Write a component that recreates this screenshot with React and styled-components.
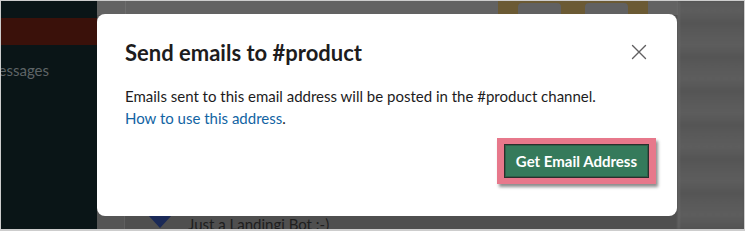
import React from "react";
import styled, { createGlobalStyle } from "styled-components";

const Global = createGlobalStyle`
  html, body { margin: 0; padding: 0; background: #fff; }
  body { font-family: Lato, "Noto Sans", sans-serif; }
  * { box-sizing: border-box; }
`;

const Frame = styled.div`
  position: relative;
  width: 745px;
  height: 231px;
  border: 1px solid #cdcdcd;
  border-bottom-width: 2px;
  display: flex;
  overflow: hidden;
  background: #4f4f4f;
`;

const Sidebar = styled.div`
  width: 96px;
  flex: none;
  background: #0a1517;
  display: flex;
  flex-direction: column;
  padding-top: 17px;
  overflow: hidden;
`;

const ActiveItem = styled.div`
  height: 27px;
  background: #3a110a;
`;

const SideLabel = styled.div`
  margin-top: 16px;
  font-size: 15px;
  color: #5e6466;
  white-space: nowrap;
  direction: rtl;
  text-align: left;
  padding-right: 48px;
`;

const Main = styled.div`
  flex: 1;
  display: flex;
  flex-direction: column;
  background: #4f4f4f;
`;

const Header = styled.div`
  height: 14px;
  background: #626262;
  display: flex;
  align-items: stretch;
  padding-left: 28px;
`;

const HeaderDivider = styled.div`
  width: 1px;
  background: #6d6d6d;
`;

const HeaderSpacer = styled.div`
  flex: 1;
`;

const Toolbar = styled.div`
  display: flex;
  width: 150px;
  background: #6b5a34;
  padding-left: 20px;
  gap: 24px;
  margin-right: 30px;
`;

const ToolButton = styled.div`
  width: 43px;
  margin-top: 2px;
  background: #616161;
  border-radius: 4px 4px 0 0;
`;

const Body = styled.div`
  flex: 1;
  display: flex;
  background: #555555;
`;

const Gutter = styled.div`
  width: 28px;
  border-right: 1px solid #5f5f5f;
`;

const Messages = styled.div`
  flex: 1;
  display: flex;
  align-items: flex-end;
  padding-left: 23px;
  gap: 16px;
  background: #4f4f4f;
`;

const Triangle = styled.div`
  width: 0;
  height: 0;
  border-left: 12px solid transparent;
  border-right: 12px solid transparent;
  border-top: 13px solid #1b2a57;
  margin-bottom: 1px;
`;

const BotText = styled.div`
  font-size: 15px;
  color: #1e1e1e;
  line-height: 16px;
  height: 13px;
  overflow: hidden;
`;

const RightPanel = styled.div`
  width: 66px;
  flex: none;
  border-left: 1px solid #777;
  background: repeating-linear-gradient(
    180deg,
    #5a5a5a 0px,
    #5d5d5d 10px,
    #555555 22px,
    #5a5a5a 34px
  );
  filter: blur(1px);
`;

const Modal = styled.div`
  position: absolute;
  left: 96px;
  top: 13px;
  width: 580px;
  height: 202px;
  background: #fff;
  border-radius: 8px;
  padding: 22px 28px 0 28px;
  display: flex;
  flex-direction: column;
`;

const TitleRow = styled.div`
  display: flex;
  justify-content: space-between;
  align-items: center;
  height: 32px;
`;

const Title = styled.h1`
  margin: 0;
  font-size: 22px;
  font-weight: 700;
  color: #1d1c1d;
`;

const Close = styled.button`
  border: 0;
  background: none;
  padding: 0;
  width: 20px;
  height: 20px;
  display: flex;
  align-items: center;
  justify-content: center;
  cursor: pointer;
`;

const Text = styled.p`
  margin: 17px 0 0 0;
  font-size: 15px;
  line-height: 22px;
  color: #1d1c1d;
`;

const Link = styled.a`
  color: #1264a3;
  text-decoration: none;
`;

const Footer = styled.div`
  display: flex;
  justify-content: flex-end;
  margin-top: 9px;
  margin-right: -7px;
`;

const Highlight = styled.div`
  background: #e7788b;
  padding: 6px 7px;
  box-shadow: 2px 3px 3px rgba(0, 0, 0, 0.45);
`;

const PrimaryButton = styled.button`
  display: block;
  border: 1px solid #2a2f2c;
  background: #357a5b;
  color: #fff;
  font-family: Lato, "Noto Sans", sans-serif;
  font-weight: 700;
  font-size: 15px;
  height: 34px;
  padding: 0 11px;
  box-shadow: inset 0 0 0 1px #2f5f48;
  cursor: pointer;
`;

export default function App() {
  return (
    <>
      <Global />
      <Frame>
        <Sidebar>
          <ActiveItem />
          <SideLabel>essages</SideLabel>
        </Sidebar>
        <Main>
          <Header>
            <HeaderDivider />
            <HeaderSpacer />
            <Toolbar>
              <ToolButton />
              <ToolButton />
            </Toolbar>
          </Header>
          <Body>
            <Gutter />
            <Messages>
              <Triangle />
              <BotText>Just a Landingi Bot :-)</BotText>
            </Messages>
          </Body>
        </Main>
        <RightPanel />
        <Modal role="dialog" aria-label="Send emails to #product">
          <TitleRow>
            <Title>Send emails to #product</Title>
            <Close aria-label="Close">
              <svg width="16" height="16" viewBox="0 0 16 16">
                <path d="M1.5 1.5 L14.5 14.5 M14.5 1.5 L1.5 14.5" stroke="#616061" strokeWidth="1.4" strokeLinecap="round" fill="none" />
              </svg>
            </Close>
          </TitleRow>
          <Text>
            Emails sent to this email address will be posted in the #product channel.
            <br />
            <Link href="#">How to use this address</Link>.
          </Text>
          <Footer>
            <Highlight>
              <PrimaryButton>Get Email Address</PrimaryButton>
            </Highlight>
          </Footer>
        </Modal>
      </Frame>
    </>
  );
}
